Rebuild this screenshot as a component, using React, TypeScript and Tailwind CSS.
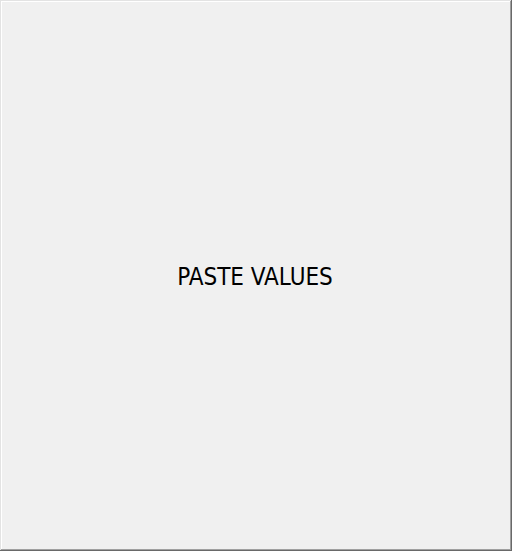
export default function App() {
  return (
    <div className="w-[512px] h-[551px] bg-[#f0f0f0] flex items-center justify-center shadow-[inset_-1px_-1px_0_#696969,inset_1px_1px_0_#e3e3e3,inset_-2px_-2px_0_#a0a0a0,inset_2px_2px_0_#ffffff]">
      <span className="text-[24px] text-black font-['DejaVu_Sans_Condensed','DejaVu_Sans',sans-serif] leading-none pr-[2px] pt-[3px]">
        PASTE VALUES
      </span>
    </div>
  );
}
